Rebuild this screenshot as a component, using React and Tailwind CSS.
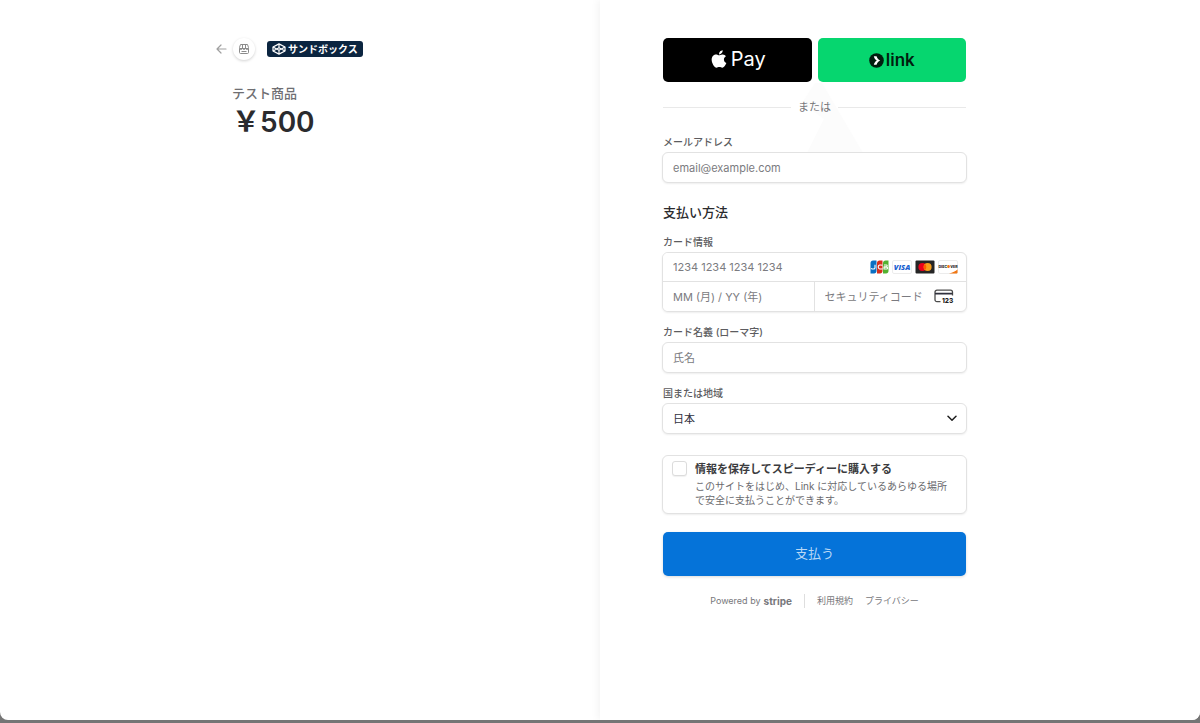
import React, { useState } from 'react';
import { FaApple } from 'react-icons/fa';

const inputClass =
  'w-full bg-white px-[10px] text-[11px] leading-4 text-[#30313d] placeholder:text-[#7b7b80] outline-none focus:ring-2 focus:ring-blue-300';
const boxClass = 'rounded-md border border-[#e2e2e2] bg-white shadow-[0_1px_2px_rgba(0,0,0,0.07)]';

const BackIcon = () => (
  <svg width="11" height="10" viewBox="0 0 11 10" fill="none" stroke="#a0a0a0" strokeWidth="1.2" strokeLinecap="round" strokeLinejoin="round">
    <path d="M10 5H1.2M5 1 1 5l4 4" />
  </svg>
);

const StoreIcon = () => (
  <svg width="12" height="12" viewBox="0 0 12 12" fill="none" stroke="#8b8b8b" strokeWidth="1">
    <path d="M2.500 1.500h7l1 3v1h-9v-1z" strokeLinejoin="round" />
    <path d="M4.500 1.500v4M7.500 1.500v4M1.500 5.500c.4 1.200 2.600 1.200 3 0 .3 1.200 2.700 1.200 3 0 .4 1.200 2.600 1.200 3 0M1.500 6v3.500c0 .6.4 1 1 1h7c.6 0 1-.4 1-1V6M3.500 8.500h5" />
  </svg>
);

const SandboxIcon = () => (
  <svg width="14" height="12" viewBox="0 0 14 12" fill="none" stroke="#fff" strokeWidth="1.2" strokeLinejoin="round">
    <path d="M7 .9 13 4v4L7 11.1 1 8V4z" />
    <path d="M1 4l6 3.2L13 4M1 8l6-3.2L13 8M7 .9v3.9M7 7.2v3.9" />
  </svg>
);

const LinkIcon = () => (
  <svg width="15" height="15" viewBox="0 0 15 15">
    <circle cx="7.5" cy="7.5" r="7.3" fill="#011e0f" />
    <path d="M4.800 3.200h2.800c.4 1.800 1.700 3.400 3.600 4.300-1.900.9-3.200 2.500-3.600 4.300H4.800c.4-1.700 1.400-3.300 3-4.300-1.600-1-2.600-2.600-3-4.300z" fill="#fff" />
  </svg>
);

const JcbIcon = () => (
  <svg width="19" height="14" viewBox="0 0 19 14" role="img" aria-label="JCB">
    <path d="M3 .5h3.500v10.500c0 1.500-.9 2.500-2.500 2.500H.5V3C.5 1.400 1.500.5 3 .5z" fill="#0a6fc2" />
    <path d="M9.500.5h3v10.500c0 1.500-.9 2.500-2.500 2.500H7V3C7 1.400 8 .5 9.500.5z" fill="#d8301c" />
    <path d="M15.500.5h3v10.500c0 1.500-.9 2.500-2.500 2.500h-3V3c0-1.600 1-2.500 2.500-2.500z" fill="#53b230" />
    <path d="M5 4.800v2.900c0 .9-.6 1.300-1.500 1.300-.8 0-1.600-.2-2.500-.6M12.500 5.200c-1.800-.5-4.300-.5-4.300 1.800s2.500 2.300 4.300 1.800M14 5h2.400c1.100 0 1.100 1.700 0 1.800H14M14 7.100h2.700c1.200 0 1.200 1.900 0 1.900H14z" fill="none" stroke="#fff" strokeWidth="1.1" />
  </svg>
);

const VisaIcon = () => (
  <svg width="20" height="14" viewBox="0 0 20 14" role="img" aria-label="Visa">
    <rect x=".5" y=".5" width="19" height="13" rx="1.5" fill="#fff" stroke="#ececec" />
    <text x="10" y="9.7" textAnchor="middle" fontFamily="Open Sans, sans-serif" fontSize="7.5" fontWeight="800" fontStyle="italic" fill="#1a5fd0">VISA</text>
  </svg>
);

const MastercardIcon = () => (
  <svg width="20" height="14" viewBox="0 0 20 14" role="img" aria-label="Mastercard">
    <rect x=".5" y=".5" width="19" height="13" rx="1" fill="#252525" />
    <circle cx="7.4" cy="7" r="4" fill="#eb001b" />
    <circle cx="12.6" cy="7" r="4" fill="#f79e1b" />
    <path d="M10 4a4 4 0 0 1 0 6 4 4 0 0 1 0-6z" fill="#ff5f00" />
  </svg>
);

const DiscoverIcon = () => (
  <svg width="20" height="14" viewBox="0 0 20 14" role="img" aria-label="Discover">
    <rect x=".5" y=".5" width="19" height="13" rx="1.5" fill="#fff" stroke="#ececec" />
    <path d="M19.500 9.500c-2 1.600-4.700 3-8.500 4h7.500c.6 0 1-.4 1-1z" fill="#f27712" />
    <text x="10" y="8" textAnchor="middle" fontFamily="Inter, sans-serif" fontSize="3.6" fontWeight="800" fill="#222">
      DISC<tspan fill="#f27712">●</tspan>VER
    </text>
  </svg>
);

const CvcIcon = () => (
  <svg width="20" height="15" viewBox="0 0 20 15" fill="none" role="img" aria-label="CVC">
    <path d="M6.500 12.700H3A2 2 0 0 1 1 10.700V3.200a2 2 0 0 1 2-2h13.500a2 2 0 0 1 2 2V6.500" stroke="#4c4c4c" strokeWidth="1.3" />
    <path d="M1 4.700h17.500" stroke="#30313d" strokeWidth="1.8" />
    <text x="8" y="14" fontFamily="Inter, sans-serif" fontSize="6.5" fontWeight="800" fill="#222">123</text>
  </svg>
);

const Label = ({ htmlFor, children }) => (
  <label htmlFor={htmlFor} className="mb-0.5 block px-px text-[10px] leading-4 font-medium text-[#5c5c60]">
    {children}
  </label>
);

const OrderSummary = () => (
  <section className="flex justify-center px-6 pt-[38px] md:justify-end md:pr-16 md:pl-6">
    <div className="w-full max-w-[320px]">
      <div className="flex items-center">
        <a href="#back" aria-label="戻る" className="mr-1.5">
          <BackIcon />
        </a>
        <span className="flex size-[22px] items-center justify-center rounded-full bg-white shadow-[0_1px_3px_rgba(0,0,0,0.18)]">
          <StoreIcon />
        </span>
        <span className="ml-3 flex h-4 items-center gap-0.5 rounded-[3px] bg-[#0b2540] px-[5px] text-[10px] leading-4 font-bold text-white">
          <SandboxIcon />
          サンドボックス
        </span>
      </div>
      <div className="mt-[23px] pl-4">
        <h1 className="text-[13px] leading-5 font-medium text-[#6f6f73]">テスト商品</h1>
        <p className="text-[28px] leading-[38px] font-semibold text-[#2b2b2e]">{'\uFFE5'}500</p>
      </div>
    </div>
  </section>
);

const PaymentForm = () => {
  const [country, setCountry] = useState('JP');
  const [save, setSave] = useState(false);

  return (
    <section className="flex justify-center bg-white px-6 pt-[38px] shadow-[-2px_0_8px_rgba(0,0,0,0.05)] md:justify-start md:pr-6 md:pl-[62px]">
      <form className="w-full max-w-[305px]" onSubmit={(e) => e.preventDefault()}>
        {/* Express checkout */}
        <div className="grid grid-cols-2 gap-1.5 px-px">
          <button type="button" aria-label="Apple Pay" className="flex h-11 items-center justify-center gap-0.5 rounded-[5px] bg-black pb-0.5 text-xl text-white">
            <FaApple className="size-5" />
            Pay
          </button>
          <button type="button" className="flex h-11 items-center justify-center gap-0.5 rounded-[5px] bg-[#06d66f] pt-px text-[17px] font-semibold text-[#011e0f]">
            <LinkIcon />
            link
          </button>
        </div>

        <div className="relative mt-[17px] flex items-center gap-[7px] px-px text-[11px] leading-4 text-[#77777b]">
          {/* Soft wedge behind the divider */}
          <svg className="pointer-events-none absolute -top-4 left-[140px]" width="62" height="70" viewBox="0 0 62 70" aria-hidden="true">
            <path d="M13 0h7l41 70H5l17-34L0 20z" fill="#fcfcfc" />
          </svg>
          <span className="relative h-px flex-1 bg-[#e9e9e9]" />
          <span className="relative">または</span>
          <span className="relative h-px flex-1 bg-[#e9e9e9]" />
        </div>

        <div className="relative mt-[19px]">
          <Label htmlFor="email">メールアドレス</Label>
          <input id="email" type="email" placeholder="email@example.com" className={`h-[31px] ${inputClass} ${boxClass}`} />
        </div>

        <h2 className="mt-[19px] px-px text-[13px] leading-5 font-medium text-[#2b2b2e]">支払い方法</h2>

        <div className="mt-3">
          <Label htmlFor="card-number">カード情報</Label>
          <div className={`overflow-hidden ${boxClass}`}>
            <div className="flex h-[29px] items-center border-b border-[#e2e2e2] pr-2">
              <input id="card-number" type="text" placeholder="1234 1234 1234 1234" className={`h-7 min-w-0 flex-1 ${inputClass}`} />
              <div className="flex gap-[3px]">
                <JcbIcon />
                <VisaIcon />
                <MastercardIcon />
                <DiscoverIcon />
              </div>
            </div>
            <div className="grid h-[29px] grid-cols-2">
              <input type="text" aria-label="有効期限" placeholder="MM (月) / YY (年)" className={`min-w-0 border-r border-[#e2e2e2] ${inputClass}`} />
              <div className="flex items-center pr-3">
                <input type="text" aria-label="セキュリティコード" placeholder="セキュリティコード" className={`h-full min-w-0 flex-1 ${inputClass}`} />
                <CvcIcon />
              </div>
            </div>
          </div>
        </div>

        <div className="mt-3">
          <Label htmlFor="card-name">カード名義 (ローマ字)</Label>
          <input id="card-name" type="text" placeholder="氏名" className={`h-[31px] ${inputClass} ${boxClass}`} />
        </div>

        <div className="mt-3">
          <Label htmlFor="country">国または地域</Label>
          <div className="relative">
            <select
              id="country"
              value={country}
              onChange={(e) => setCountry(e.target.value)}
              className={`h-[31px] appearance-none ${inputClass} ${boxClass}`}
            >
              <option value="JP">日本</option>
            </select>
            <svg className="pointer-events-none absolute top-3 right-[10px]" width="10" height="7" viewBox="0 0 10 7" fill="none" stroke="#1f1f1f" strokeWidth="1.5" strokeLinecap="round" strokeLinejoin="round">
              <path d="M1 1.300 5 5.300l4-4" />
            </svg>
          </div>
        </div>

        <div className={`mt-[21px] flex gap-2 pt-[5px] pr-3 pb-1.5 pl-[9px] ${boxClass}`}>
          <input
            id="save-info"
            type="checkbox"
            checked={save}
            onChange={(e) => setSave(e.target.checked)}
            className="size-[15px] shrink-0 appearance-none rounded-[3px] border border-[#dcdcdc] bg-white shadow-[0_1px_1px_rgba(0,0,0,0.06)] checked:bg-[#0573d9]"
          />
          <div>
            <label htmlFor="save-info" className="block text-[11px] leading-4 font-bold text-[#3b3b3e]">
              情報を保存してスピーディーに購入する
            </label>
            <p className="mt-0.5 text-[10px] leading-[14px] text-[#6a6a6e]">
              このサイトをはじめ、Link に対応しているあらゆる場所で安全に支払うことができます。
            </p>
          </div>
        </div>

        <div className="mt-[18px] px-px">
          <button type="submit" className="h-11 w-full rounded-[5px] bg-[#0573d9] text-[13px] text-[#b9d8f5] shadow-[0_1px_3px_rgba(0,0,0,0.15)]">
            支払う
          </button>
        </div>

        <footer className="mt-[17px] flex items-center justify-center gap-3 text-[9px] leading-4 text-[#77777b]">
          <a href="#stripe" className="flex h-[14px] items-center gap-[3px] border-r border-[#dedede] pr-3">
            Powered by <b className="text-[10px]">stripe</b>
          </a>
          <a href="#terms">利用規約</a>
          <a href="#privacy">プライバシー</a>
        </footer>
      </form>
    </section>
  );
};

const App = () => (
  <div lang="ja" className="flex min-h-screen flex-col bg-[#757575] pb-[3px] font-['Inter','Noto_Sans_CJK_JP',sans-serif]">
    <main className="grid flex-1 gap-8 overflow-hidden rounded-b-lg bg-white md:grid-cols-2 md:gap-0">
      <OrderSummary />
      <PaymentForm />
    </main>
  </div>
);

export default App;
